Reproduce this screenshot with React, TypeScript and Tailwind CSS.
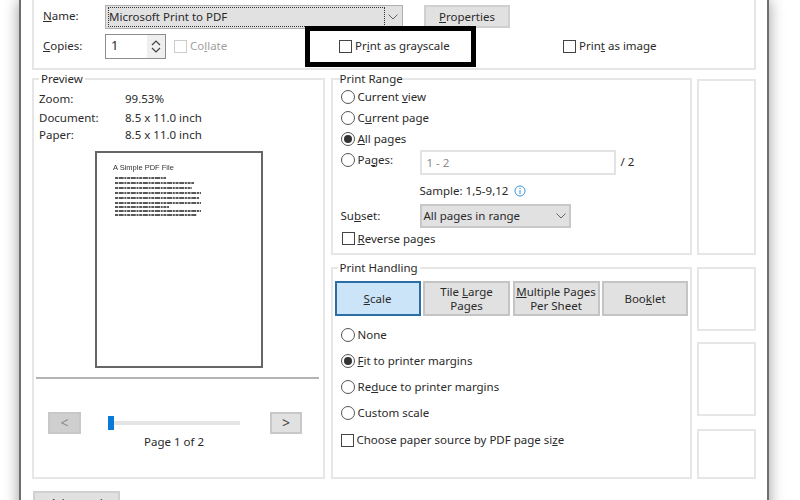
import React from "react";

const Radio = ({ on = false }: { on?: boolean }) => (
  <span className="flex h-[14px] w-[14px] shrink-0 items-center justify-center rounded-full border border-[#555] bg-white">
    {on && <span className="h-[8px] w-[8px] rounded-full bg-[#333]" />}
  </span>
);

const Check = ({ off = false }: { off?: boolean }) => (
  <span className={`block h-[13px] w-[13px] shrink-0 border bg-white ${off ? "border-[#ccc]" : "border-[#444]"}`} />
);

const Chevron = () => (
  <svg width="12" height="8" viewBox="0 0 12 8" fill="none" stroke="#666" strokeWidth="1">
    <path d="M1.5 1.5 L6 6 L10.5 1.5" />
  </svg>
);

const Option = ({ on, children, h }: { on?: boolean; children: React.ReactNode; h: string }) => (
  <div className={`flex items-center gap-[3px] ${h}`}>
    <Radio on={on} />
    <span>{children}</span>
  </div>
);

const Tab = ({ active, w, children }: { active?: boolean; w: string; children: React.ReactNode }) => (
  <div
    className={`flex h-[35px] items-center justify-center whitespace-nowrap border-2 text-center leading-[14px] ${w} ${
      active ? "border-[#2b6ea6] bg-[#cce4f7]" : "border-[#c4c4c4] bg-[#e1e1e1]"
    }`}
  >
    <span>{children}</span>
  </div>
);

export default function App() {
  return (
    <div className="h-[500px] w-[800px] overflow-hidden bg-white pl-[19px] text-[11.5px] leading-[16px] text-[#2a2a2a] [font-family:'Noto_Sans',sans-serif]">
      <div className="h-[540px] w-[750px] border-x-2 border-[#6e6e6e] bg-white pl-[11px] shadow-[0_0_14px_rgba(0,0,0,0.4)]">
        {/* top panel */}
        <div className="relative h-[70px] w-[724px] border-x-2 border-b-2 border-[#e6e6e6]">
          <div className="flex h-[33px] items-start pl-[9px] pt-[5px]">
            <span className="w-[62px] pt-[3px]"><u>N</u>ame:</span>
            <div className="flex h-[24px] w-[298px] items-center justify-between border border-[#b0b0b0] bg-[#e1e1e1] pl-[2px] pr-[2px]">
              <span className="flex h-[20px] w-[277px] items-center border border-dotted border-[#333]">Microsoft Print to PDF</span>
              <span className="pr-[1px]"><Chevron /></span>
            </div>
            <div className="ml-[21px] flex h-[23px] w-[86px] items-center justify-center border-2 border-[#d0d0d0] bg-[#e1e1e1]">
              <span><u>P</u>roperties</span>
            </div>
          </div>
          <div className="flex h-[26px] items-center pl-[9px]">
            <span className="w-[62px]"><u>C</u>opies:</span>
            <div className="flex h-[25px] w-[61px] items-stretch border border-[#8c8c8c] bg-white">
              <span className="flex-1 pl-[5px] pt-[2px] text-[13px]">1</span>
              <div className="flex w-[18px] flex-col items-center justify-center gap-[1px] bg-[#efefef]">
                <svg width="10" height="6" viewBox="0 0 10 6" fill="none" stroke="#444" strokeWidth="1.2"><path d="M1 5 L5 1 L9 5" /></svg>
                <svg width="10" height="6" viewBox="0 0 10 6" fill="none" stroke="#444" strokeWidth="1.2"><path d="M1 1 L5 5 L9 1" /></svg>
              </div>
            </div>
            <div className="ml-[8px] flex w-[165px] items-center gap-[3px] text-[#a0a0a0]">
              <Check off />
              <span>Co<u>l</u>late</span>
            </div>
            <div className="flex w-[224px] items-center gap-[3px]">
              <Check />
              <span>Pr<u>i</u>nt as grayscale</span>
            </div>
            <div className="flex items-center gap-[3px]">
              <Check />
              <span>Prin<u>t</u> as image</span>
            </div>
          </div>
          <div className="pointer-events-none absolute left-[271px] top-[26px] h-[41px] w-[171px] border-[5px] border-black" />
        </div>

        <div className="mt-[1px] grid w-[724px] grid-cols-[293px_361px_59px] gap-x-[5.5px]">
          {/* preview */}
          <fieldset className="row-span-2 h-[408px] border-2 border-[#e6e6e6] pl-[5px]">
            <legend className="px-[2px]">Preview</legend>
            <div className="grid grid-cols-[86px_1fr] pt-[4px]">
              <span className="h-[19px]">Zoom:</span><span>99.53%</span>
              <span className="h-[17px]">Document:</span><span>8.5 x 11.0 inch</span>
              <span className="h-[17px]">Paper:</span><span>8.5 x 11.0 inch</span>
            </div>
            <div className="ml-[56px] mt-[7px] h-[217px] w-[168px] border-2 border-[#666] bg-white">
              <svg width="164" height="213" viewBox="0 0 164 213" className="blur-[0.35px]">
                <text x="16" y="17" fontSize="7.5" fill="#333" fontFamily="Liberation Sans">A Simple PDF File</text>
                <g stroke="#222" strokeWidth="1.7" strokeDasharray="3 0.7 5 0.7 2 0.7">
                  <path d="M18 25 H69" />
                  <path d="M18 30 H97" />
                  <path d="M18 35 H95" />
                  <path d="M18 40 H104" />
                  <path d="M18 45 H102" />
                  <path d="M18 50 H104" />
                  <path d="M18 54 H72" />
                  <path d="M18 58 H104" />
                  <path d="M18 62 H100" />
                </g>
              </svg>
            </div>
            <div className="ml-[-3px] mt-[9px] h-[2px] w-[283px] bg-[#b4b4b4]" />
            <div className="flex items-start pt-[33px]">
              <div className="ml-[9px] flex h-[22px] w-[33px] items-center justify-center border-2 border-[#c8c8c8] bg-[#cfcfcf] text-[14px] text-[#8c8c8c]">&lt;</div>
              <div className="ml-[27px] mt-[3px] flex w-[132px] flex-col items-center">
                <div className="flex h-[15px] w-full items-center bg-[linear-gradient(#0000_6px,#e4e4e4_6px,#e4e4e4_10px,#0000_10px)]">
                  <span className="h-[14px] w-[6px] bg-[#0a7ad9]" />
                </div>
                <span className="mt-[4px]">Page 1 of 2</span>
              </div>
              <div className="ml-[30px] flex h-[22px] w-[32px] items-center justify-center border-2 border-[#c8c8c8] bg-[#e1e1e1] text-[14px] text-[#444]">&gt;</div>
            </div>
          </fieldset>

          {/* print range */}
          <fieldset className="h-[184px] border-2 border-[#e6e6e6] pl-[8px]">
            <legend className="ml-[-1px]">Print Range</legend>
            <Option h="h-[20px]">Current <u>v</u>iew</Option>
            <Option h="h-[21px]">C<u>u</u>rrent page</Option>
            <Option h="h-[21px]" on><u>A</u>ll pages</Option>
            <div className="flex items-start">
              <div className="flex h-[21px] w-[79px] items-center gap-[3px]"><Radio /><span>Pa<u>g</u>es:</span></div>
              <div className="mt-[1px] flex h-[25px] w-[196px] items-center border-2 border-[#e3e3e3] pl-[5px] text-[#8a8a8a]">1 - 2</div>
              <span className="ml-[5px] pt-[5px]">/ 2</span>
            </div>
            <div className="ml-[79px] mt-[7px] flex h-[17px] items-center gap-[6px]">
              <span>Sample: 1,5-9,12</span>
              <svg width="12" height="12" viewBox="0 0 12 12" fill="none" stroke="#3a96d8" strokeWidth="1">
                <circle cx="6" cy="6" r="5" />
                <path d="M6 5 V9 M6 3 V4" />
              </svg>
            </div>
            <div className="mt-[5px] flex items-center">
              <span className="w-[79px]">Su<u>b</u>set:</span>
              <div className="flex h-[24px] w-[151px] items-center justify-between border-2 border-[#c8c8c8] bg-[#e1e1e1] pl-[2px] pr-[2px]">
                <span>All pages in range</span>
                <Chevron />
              </div>
            </div>
            <div className="mt-[2px] flex h-[17px] items-center gap-[3px] pl-[1px]">
              <Check />
              <span><u>R</u>everse pages</span>
            </div>
          </fieldset>
          <div className="mt-[8px] h-[176px] border-2 border-[#e6e6e6]" />

          {/* print handling */}
          <fieldset className="mt-[5px] h-[219px] border-2 border-[#e6e6e6] pl-[2px]">
            <legend className="ml-[3px] px-[2px]">Print Handling</legend>
            <div className="flex gap-[2.5px] pt-[5px]">
              <Tab active w="w-[86px]"><u>S</u>cale</Tab>
              <Tab w="w-[87px]">Tile <u>L</u>arge<br />Pages</Tab>
              <Tab w="w-[87px]"><u>M</u>ultiple Pages<br />Per Sheet</Tab>
              <Tab w="w-[86px]">Boo<u>k</u>let</Tab>
            </div>
            <div className="pl-[6px] pt-[6px]">
              <Option h="h-[26px]">None</Option>
              <Option h="h-[26px]" on><u>F</u>it to printer margins</Option>
              <Option h="h-[26px]">Re<u>d</u>uce to printer margins</Option>
              <Option h="h-[26px]">Custom scale</Option>
              <div className="mt-[1px] flex h-[26px] items-center gap-[3px]">
                <Check />
                <span>Choose paper source by PDF page si<u>z</u>e</span>
              </div>
            </div>
          </fieldset>
          <div className="flex flex-col pt-[12px]">
            <div className="h-[64px] border-2 border-[#e6e6e6]" />
            <div className="mt-[11px] h-[74px] border-2 border-[#e6e6e6]" />
            <div className="mt-[13px] h-[50px] border-2 border-[#e6e6e6]" />
          </div>
        </div>

        <div className="ml-[1px] mt-[12px] flex h-[24px] w-[87px] items-center justify-center border-2 border-[#d0d0d0] bg-[#e1e1e1]">
          <span>Advanced</span>
        </div>
      </div>
    </div>
  );
}
